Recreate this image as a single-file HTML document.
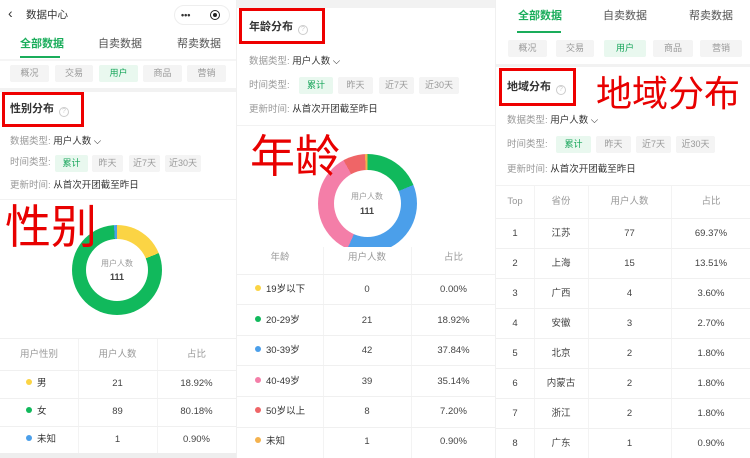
<!DOCTYPE html>
<html><head><meta charset="utf-8"><style>
*{margin:0;padding:0;box-sizing:border-box}
body{width:750px;height:458px;overflow:hidden;background:#fff;font-family:"Liberation Sans","Noto Sans CJK SC",sans-serif;color:#333;position:relative;line-height:14px}
.a{position:absolute;white-space:nowrap;line-height:14px}
.p{position:absolute;top:0;height:458px;overflow:hidden;background:#fff}
.btn{position:absolute;height:17px;background:#f4f4f4;color:#999;font-size:9px;text-align:center;line-height:17px;border-radius:2px}
.on{background:#e9f8ef;color:#16a55a}
.t{font-size:9.5px;color:#999}
.c{position:absolute;text-align:center;font-size:9.5px;color:#444;line-height:14px}
.rb{position:absolute;border:3px solid #e00;}
.big{position:absolute;color:#e80000;font-family:"Noto Sans CJK SC",sans-serif;line-height:1!important;font-weight:normal}
.dot{display:inline-block;width:6px;height:6px;border-radius:50%;margin-right:5px;vertical-align:1px}
.hl{position:absolute;height:1px;background:#f0f0f0}
.vl{position:absolute;width:1px;background:#f3f3f3}
.q{display:inline-block;width:10px;height:10px;border:1px solid #ccc;border-radius:50%;font-size:7px;color:#ccc;text-align:center;line-height:8px;margin-left:5px;vertical-align:-1px;font-weight:normal}
</style></head><body>

<!-- PANEL 1 -->
<div class="p" style="left:0;width:236px">
 <div class="a" style="left:8px;top:6px;font-size:14px;color:#333">‹</div>
 <div class="a" style="left:26px;top:8px;font-size:10.5px">数据中心</div>
 <div class="a" style="left:174px;top:5px;width:56px;height:20px;border:1px solid #eee;border-radius:10px"></div>
 <div class="a" style="left:181px;top:8px;font-size:9px;font-weight:bold">•••</div>
 <div class="a" style="left:210px;top:10px;width:10px;height:10px;border:1.5px solid #222;border-radius:50%"><div style="width:4px;height:4px;background:#222;border-radius:50%;margin:1.5px"></div></div>
 <div class="a" style="left:20px;top:37px;font-size:11px;color:#1aad5b;font-weight:bold">全部数据</div>
 <div class="a" style="left:20px;top:56px;width:40px;height:2px;background:#1aad5b"></div>
 <div class="a" style="left:98px;top:37px;font-size:11px;color:#555">自卖数据</div>
 <div class="a" style="left:177px;top:37px;font-size:11px;color:#555">帮卖数据</div>
 <div class="a" style="left:0;top:59px;width:236px;height:2px;background:#f5f5f5"></div>
 <div class="btn" style="left:10px;top:65px;width:39px">概况</div>
 <div class="btn" style="left:55px;top:65px;width:38px">交易</div>
 <div class="btn on" style="left:99px;top:65px;width:39px">用户</div>
 <div class="btn" style="left:143px;top:65px;width:39px">商品</div>
 <div class="btn" style="left:187px;top:65px;width:39px">营销</div>
 <div class="a" style="left:0;top:88px;width:236px;height:4px;background:#f2f2f2"></div>
 <div class="a" style="left:10px;top:102px;font-size:11px;font-weight:bold">性别分布<span class="q">?</span></div>
 <div class="rb" style="left:2px;top:92px;width:82px;height:35px"></div>
 <div class="a t" style="left:10px;top:135px">数据类型: <span style="color:#333">用户人数 ⌵</span></div>
 <div class="a t" style="left:10px;top:156px">时间类型:</div>
 <div class="btn on" style="left:55px;top:155px;width:33px">累计</div>
 <div class="btn" style="left:92px;top:155px;width:31px">昨天</div>
 <div class="btn" style="left:129px;top:155px;width:31px">近7天</div>
 <div class="btn" style="left:165px;top:155px;width:36px">近30天</div>
 <div class="a t" style="left:10px;top:179px">更新时间: <span style="color:#333">从首次开团截至昨日</span></div>
 <div class="a" style="left:0;top:199px;width:236px;height:1px;background:#f2f2f2"></div>
 <div class="a" style="left:72px;top:225px;width:90px;height:90px;border-radius:50%;background:conic-gradient(#fbd444 0 68deg,#11b95c 68deg 356deg,#4b9fea 356deg 360deg)"></div>
 <div class="a" style="left:86px;top:239px;width:62px;height:62px;border-radius:50%;background:#fff"></div>
 <div class="a" style="left:101px;top:257px;font-size:8px;color:#999">用户人数</div>
 <div class="a" style="left:110px;top:270px;font-size:9px;font-weight:bold;color:#444">111</div>
 <div class="big" style="left:5px;top:201px;font-size:46px">性别</div>
 <div class="a" style="left:0;top:338px;width:236px;height:1px;background:#f0f0f0"></div>
 <div class="vl" style="left:78px;top:339px;height:115px"></div>
 <div class="vl" style="left:157px;top:339px;height:115px"></div>
 <div class="c" style="left:0;width:78px;top:348px;color:#999">用户性别</div>
 <div class="c" style="left:78px;width:79px;top:348px;color:#999">用户人数</div>
 <div class="c" style="left:157px;width:79px;top:348px;color:#999">占比</div>
 <div class="hl" style="left:0;top:370px;width:236px"></div>
 <div class="a" style="left:26px;top:377px;font-size:9.5px"><span class="dot" style="background:#fbd444"></span>男</div>
 <div class="c" style="left:78px;width:79px;top:377px">21</div><div class="c" style="left:157px;width:79px;top:377px">18.92%</div>
 <div class="hl" style="left:0;top:398px;width:236px"></div>
 <div class="a" style="left:26px;top:405px;font-size:9.5px"><span class="dot" style="background:#11b95c"></span>女</div>
 <div class="c" style="left:78px;width:79px;top:405px">89</div><div class="c" style="left:157px;width:79px;top:405px">80.18%</div>
 <div class="hl" style="left:0;top:426px;width:236px"></div>
 <div class="a" style="left:26px;top:433px;font-size:9.5px"><span class="dot" style="background:#4b9fea"></span>未知</div>
 <div class="c" style="left:78px;width:79px;top:433px">1</div><div class="c" style="left:157px;width:79px;top:433px">0.90%</div>
 <div class="a" style="left:0;top:453px;width:236px;height:5px;background:#eee"></div>
</div>

<!-- PANEL 2 -->
<div class="p" style="left:236px;width:259px;border-left:1px solid #f0f0f0">
 <div class="a" style="left:0;top:0;width:259px;height:8px;background:#f2f2f2"></div>
 <div class="a" style="left:12px;top:20px;font-size:11px;font-weight:bold">年龄分布<span class="q">?</span></div>
 <div class="rb" style="left:2px;top:8px;width:86px;height:36px"></div>
 <div class="a t" style="left:12px;top:55px">数据类型: <span style="color:#333">用户人数 ⌵</span></div>
 <div class="a t" style="left:12px;top:79px">时间类型:</div>
 <div class="btn on" style="left:62px;top:77px;width:34px">累计</div>
 <div class="btn" style="left:101px;top:77px;width:35px">昨天</div>
 <div class="btn" style="left:142px;top:77px;width:35px">近7天</div>
 <div class="btn" style="left:182px;top:77px;width:40px">近30天</div>
 <div class="a t" style="left:12px;top:103px">更新时间: <span style="color:#333">从首次开团截至昨日</span></div>
 <div class="a" style="left:0;top:125px;width:259px;height:1px;background:#f2f2f2"></div>
 <div class="a" style="left:81px;top:154px;width:99px;height:99px;border-radius:50%;background:conic-gradient(#11b95c 0 68deg,#4b9fea 68deg 204deg,#f47ea8 204deg 331deg,#ef6567 331deg 357deg,#f4b24e 357deg 360deg)"></div>
 <div class="a" style="left:97px;top:170px;width:67px;height:67px;border-radius:50%;background:#fff"></div>
 <div class="a" style="left:114px;top:190px;font-size:8px;color:#999">用户人数</div>
 <div class="a" style="left:123px;top:204px;font-size:9px;font-weight:bold;color:#444">111</div>
 <div class="big" style="left:13px;top:130px;font-size:45px">年龄</div>
 <div class="a" style="left:0;top:247px;width:259px;height:8px;background:#fff"></div>
 <div class="vl" style="left:86px;top:247px;height:211px"></div>
 <div class="vl" style="left:174px;top:247px;height:211px"></div>
 <div class="c" style="left:0;width:86px;top:251px;color:#999">年龄</div>
 <div class="c" style="left:86px;width:88px;top:251px;color:#999">用户人数</div>
 <div class="c" style="left:174px;width:85px;top:251px;color:#999">占比</div>
 <div class="hl" style="left:0;top:274px;width:259px"></div>
 <div class="a" style="left:18px;top:283px;font-size:9.5px"><span class="dot" style="background:#fbd444"></span>19岁以下</div>
 <div class="c" style="left:86px;width:88px;top:283px">0</div><div class="c" style="left:174px;width:85px;top:283px">0.00%</div>
 <div class="hl" style="left:0;top:304px;width:259px"></div>
 <div class="a" style="left:18px;top:314px;font-size:9.5px"><span class="dot" style="background:#11b95c"></span>20-29岁</div>
 <div class="c" style="left:86px;width:88px;top:314px">21</div><div class="c" style="left:174px;width:85px;top:314px">18.92%</div>
 <div class="hl" style="left:0;top:335px;width:259px"></div>
 <div class="a" style="left:18px;top:344px;font-size:9.5px"><span class="dot" style="background:#4b9fea"></span>30-39岁</div>
 <div class="c" style="left:86px;width:88px;top:344px">42</div><div class="c" style="left:174px;width:85px;top:344px">37.84%</div>
 <div class="hl" style="left:0;top:365px;width:259px"></div>
 <div class="a" style="left:18px;top:375px;font-size:9.5px"><span class="dot" style="background:#f47ea8"></span>40-49岁</div>
 <div class="c" style="left:86px;width:88px;top:375px">39</div><div class="c" style="left:174px;width:85px;top:375px">35.14%</div>
 <div class="hl" style="left:0;top:396px;width:259px"></div>
 <div class="a" style="left:18px;top:405px;font-size:9.5px"><span class="dot" style="background:#ef6567"></span>50岁以上</div>
 <div class="c" style="left:86px;width:88px;top:405px">8</div><div class="c" style="left:174px;width:85px;top:405px">7.20%</div>
 <div class="hl" style="left:0;top:427px;width:259px"></div>
 <div class="a" style="left:18px;top:435px;font-size:9.5px"><span class="dot" style="background:#f4b24e"></span>未知</div>
 <div class="c" style="left:86px;width:88px;top:435px">1</div><div class="c" style="left:174px;width:85px;top:435px">0.90%</div>
</div>

<!-- PANEL 3 -->
<div class="p" style="left:495px;width:255px;border-left:1px solid #f0f0f0">
 <div class="a" style="left:22px;top:9px;font-size:11px;color:#1aad5b;font-weight:bold">全部数据</div>
 <div class="a" style="left:21px;top:31px;width:44px;height:2px;background:#1aad5b"></div>
 <div class="a" style="left:107px;top:9px;font-size:11px;color:#555">自卖数据</div>
 <div class="a" style="left:193px;top:9px;font-size:11px;color:#555">帮卖数据</div>
 <div class="btn" style="left:12px;top:40px;width:39px">概况</div>
 <div class="btn" style="left:60px;top:40px;width:38px">交易</div>
 <div class="btn on" style="left:108px;top:40px;width:42px">用户</div>
 <div class="btn" style="left:157px;top:40px;width:40px">商品</div>
 <div class="btn" style="left:204px;top:40px;width:42px">营销</div>
 <div class="a" style="left:0;top:64px;width:255px;height:3px;background:#f2f2f2"></div>
 <div class="a" style="left:11px;top:80px;font-size:11px;font-weight:bold">地域分布<span class="q">?</span></div>
 <div class="rb" style="left:3px;top:68px;width:77px;height:38px"></div>
 <div class="big" style="left:100px;top:73px;font-size:36px">地域分布</div>
 <div class="a t" style="left:11px;top:114px">数据类型: <span style="color:#333">用户人数 ⌵</span></div>
 <div class="a t" style="left:11px;top:138px">时间类型:</div>
 <div class="btn on" style="left:60px;top:136px;width:35px">累计</div>
 <div class="btn" style="left:100px;top:136px;width:35px">昨天</div>
 <div class="btn" style="left:140px;top:136px;width:35px">近7天</div>
 <div class="btn" style="left:180px;top:136px;width:39px">近30天</div>
 <div class="a t" style="left:11px;top:163px">更新时间: <span style="color:#333">从首次开团截至昨日</span></div>
 <div class="a" style="left:0;top:185px;width:255px;height:1px;background:#f2f2f2"></div>
 <div class="vl" style="left:38px;top:186px;height:272px"></div>
 <div class="vl" style="left:92px;top:186px;height:272px"></div>
 <div class="vl" style="left:175px;top:186px;height:272px"></div>
 <div class="c" style="left:0;width:38px;top:195px;color:#999">Top</div>
 <div class="c" style="left:38px;width:54px;top:195px;color:#999">省份</div>
 <div class="c" style="left:92px;width:83px;top:195px;color:#999">用户人数</div>
 <div class="c" style="left:175px;width:80px;top:195px;color:#999">占比</div>
 <div class="hl" style="left:0;top:218px;width:255px"></div>
 <div class="c" style="left:0;width:38px;top:227px">1</div><div class="c" style="left:38px;width:54px;top:227px">江苏</div><div class="c" style="left:92px;width:83px;top:227px">77</div><div class="c" style="left:175px;width:80px;top:227px">69.37%</div>
 <div class="hl" style="left:0;top:248px;width:255px"></div>
 <div class="c" style="left:0;width:38px;top:257px">2</div><div class="c" style="left:38px;width:54px;top:257px">上海</div><div class="c" style="left:92px;width:83px;top:257px">15</div><div class="c" style="left:175px;width:80px;top:257px">13.51%</div>
 <div class="hl" style="left:0;top:278px;width:255px"></div>
 <div class="c" style="left:0;width:38px;top:287px">3</div><div class="c" style="left:38px;width:54px;top:287px">广西</div><div class="c" style="left:92px;width:83px;top:287px">4</div><div class="c" style="left:175px;width:80px;top:287px">3.60%</div>
 <div class="hl" style="left:0;top:308px;width:255px"></div>
 <div class="c" style="left:0;width:38px;top:317px">4</div><div class="c" style="left:38px;width:54px;top:317px">安徽</div><div class="c" style="left:92px;width:83px;top:317px">3</div><div class="c" style="left:175px;width:80px;top:317px">2.70%</div>
 <div class="hl" style="left:0;top:338px;width:255px"></div>
 <div class="c" style="left:0;width:38px;top:347px">5</div><div class="c" style="left:38px;width:54px;top:347px">北京</div><div class="c" style="left:92px;width:83px;top:347px">2</div><div class="c" style="left:175px;width:80px;top:347px">1.80%</div>
 <div class="hl" style="left:0;top:368px;width:255px"></div>
 <div class="c" style="left:0;width:38px;top:377px">6</div><div class="c" style="left:38px;width:54px;top:377px">内蒙古</div><div class="c" style="left:92px;width:83px;top:377px">2</div><div class="c" style="left:175px;width:80px;top:377px">1.80%</div>
 <div class="hl" style="left:0;top:398px;width:255px"></div>
 <div class="c" style="left:0;width:38px;top:407px">7</div><div class="c" style="left:38px;width:54px;top:407px">浙江</div><div class="c" style="left:92px;width:83px;top:407px">2</div><div class="c" style="left:175px;width:80px;top:407px">1.80%</div>
 <div class="hl" style="left:0;top:428px;width:255px"></div>
 <div class="c" style="left:0;width:38px;top:437px">8</div><div class="c" style="left:38px;width:54px;top:437px">广东</div><div class="c" style="left:92px;width:83px;top:437px">1</div><div class="c" style="left:175px;width:80px;top:437px">0.90%</div>
</div>
</body></html>
